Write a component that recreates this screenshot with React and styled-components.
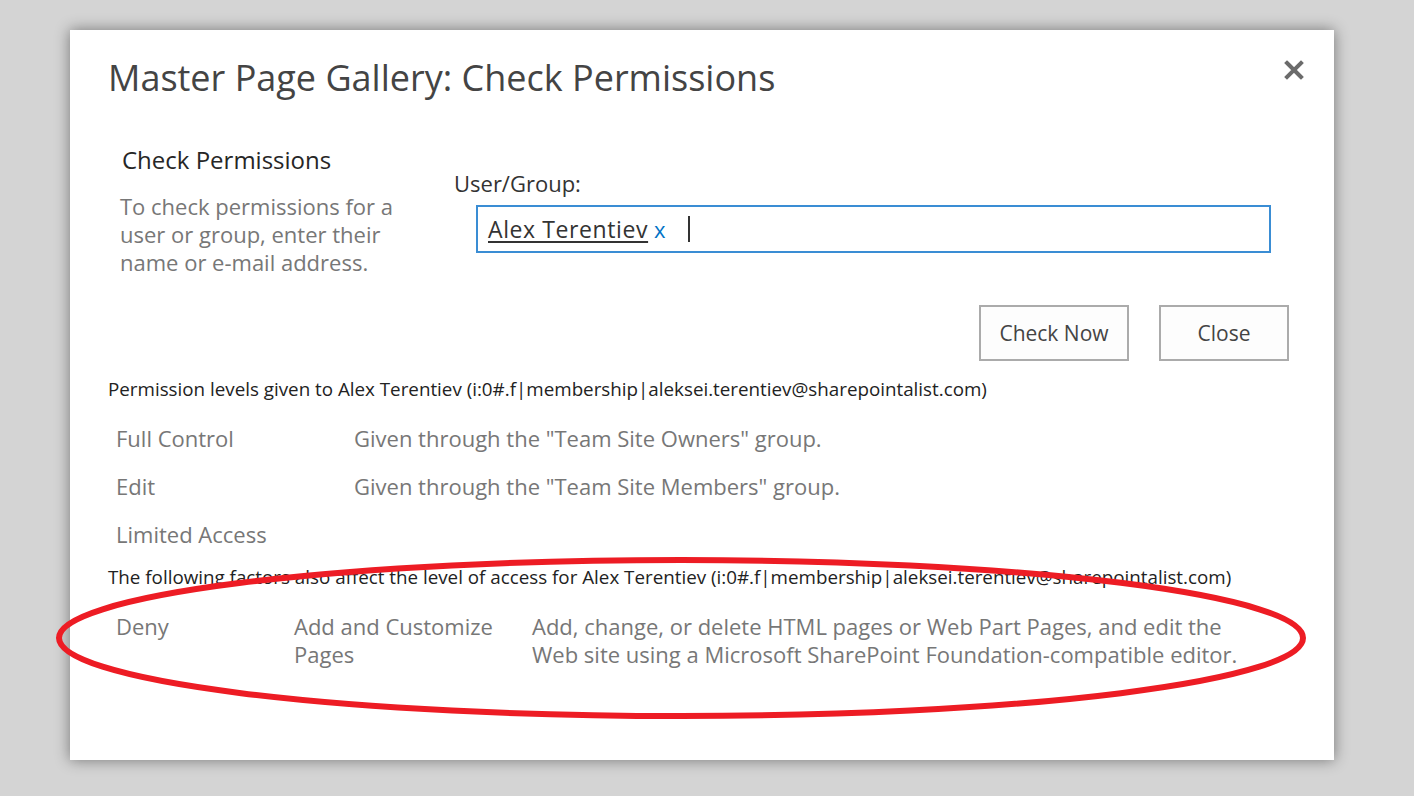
import React from 'react';
import styled, { createGlobalStyle } from 'styled-components';

const GlobalStyle = createGlobalStyle`
  html, body {
    margin: 0;
    padding: 0;
    background: #d4d4d4;
  }
  body {
    font-family: "Open Sans", "Liberation Sans", sans-serif;
    overflow: hidden;
  }
`;

const permissions = [
  { level: 'Full Control', source: 'Given through the "Team Site Owners" group.' },
  { level: 'Edit', source: 'Given through the "Team Site Members" group.' },
  { level: 'Limited Access', source: '' },
];

const account = 'Alex Terentiev (i:0#.f|membership|aleksei.terentiev@sharepointalist.com)';

const App = () => {
  return (
    <Page>
      <GlobalStyle />
      <Dialog>
        <Header>
          <Title>Master Page Gallery: Check Permissions</Title>
          <CloseIcon aria-label="close">
            <svg width="20" height="20" viewBox="0 0 20 20">
              <path d="M3 3 L17 17 M17 3 L3 17" stroke="#6b6b6b" strokeWidth="4" strokeLinecap="square" />
            </svg>
          </CloseIcon>
        </Header>

        <TopSection>
          <Intro>
            <IntroTitle>Check Permissions</IntroTitle>
            <IntroText>
              To check permissions for a user or group, enter their name or e-mail address.
            </IntroText>
          </Intro>
          <Field>
            <FieldLabel>User/Group:</FieldLabel>
            <PeoplePicker>
              <Person>Alex Terentiev</Person>
              <RemoveLink>x</RemoveLink>
              <Caret />
            </PeoplePicker>
          </Field>
        </TopSection>

        <Buttons>
          <Button $width={150}>Check Now</Button>
          <Button $width={130}>Close</Button>
        </Buttons>

        <SectionLabel $gap={16}>Permission levels given to {account}</SectionLabel>
        <LevelTable>
          {permissions.map(p => (
            <LevelRow key={p.level}>
              <LevelCell>{p.level}</LevelCell>
              <LevelCell>{p.source}</LevelCell>
            </LevelRow>
          ))}
        </LevelTable>

        <SectionLabel $gap={7}>The following factors also affect the level of access for {account}</SectionLabel>
        <DenyRow>
          <GrayText>Deny</GrayText>
          <GrayText>Add and Customize Pages</GrayText>
          <GrayText>
            Add, change, or delete HTML pages or Web Part Pages, and edit the Web site using a
            Microsoft SharePoint Foundation-compatible editor.
          </GrayText>
        </DenyRow>

        <Annotation width="1300" height="200" viewBox="0 0 1300 200">
          <ellipse cx="626" cy="100" rx="622" ry="78" fill="none" stroke="#ed1c24" strokeWidth="6" />
        </Annotation>
      </Dialog>
    </Page>
  );
};

const Page = styled.div`
  width: 1414px;
  height: 796px;
  padding: 30px 0 0 70px;
  box-sizing: border-box;
`;

const Dialog = styled.div`
  position: relative;
  width: 1264px;
  height: 730px;
  box-sizing: border-box;
  background: #fff;
  padding: 26px 45px 0 38px;
  box-shadow: 0 0 14px rgba(0, 0, 0, 0.45);
  display: flex;
  flex-direction: column;
`;

const Header = styled.div`
  display: flex;
  justify-content: space-between;
  align-items: flex-start;
`;

const Title = styled.h1`
  margin: 0;
  font-size: 36px;
  line-height: 44px;
  font-weight: 400;
  color: #444;
`;

const CloseIcon = styled.div`
  margin: 4px -15px 0 0;
  width: 20px;
  height: 20px;
`;

const TopSection = styled.div`
  display: flex;
  margin-top: 44px;
`;

const Intro = styled.div`
  width: 290px;
  padding-left: 12px;
  margin-right: 44px;
`;

const IntroTitle = styled.div`
  padding-left: 2px;
  font-size: 24px;
  line-height: 32px;
  color: #262626;
`;

const IntroText = styled.div`
  margin-top: 16px;
  font-size: 22px;
  line-height: 28px;
  color: #777;
`;

const Field = styled.div`
  flex: 1;
  padding-top: 25px;
`;

const FieldLabel = styled.div`
  font-size: 22px;
  line-height: 28px;
  color: #333;
`;

const PeoplePicker = styled.div`
  margin: 8px 18px 0 22px;
  height: 48px;
  box-sizing: border-box;
  border: 2px solid #3a8dd4;
  display: flex;
  align-items: center;
  padding-left: 10px;
  font-size: 22px;
`;

const Person = styled.span`
  color: #333;
  font-size: 23px;
  letter-spacing: 0.6px;
  text-decoration: underline;
  text-underline-offset: 3px;
`;

const RemoveLink = styled.span`
  color: #0072c6;
  margin-left: 6px;
`;

const Caret = styled.span`
  width: 2px;
  height: 26px;
  background: #333;
  margin-left: 22px;
`;

const Buttons = styled.div`
  display: flex;
  justify-content: flex-end;
  gap: 30px;
  margin-top: 29px;
`;

const Button = styled.button`
  width: ${p => p.$width}px;
  height: 56px;
  border: 2px solid #ababab;
  background: #fdfdfd;
  font-family: inherit;
  font-size: 21px;
  color: #444;
  padding: 0;
`;

const SectionLabel = styled.div`
  margin-top: ${p => p.$gap}px;
  font-size: 18.8px;
  line-height: 24px;
  color: #222;
  white-space: nowrap;
`;

const LevelTable = styled.div`
  margin-top: 13px;
  padding-left: 8px;
`;

const LevelRow = styled.div`
  display: grid;
  grid-template-columns: 238px 1fr;
  height: 48px;
  align-items: center;
`;

const LevelCell = styled.div`
  font-size: 22px;
  line-height: 28px;
  color: #777;
`;

const DenyRow = styled.div`
  margin-top: 23px;
  padding-left: 8px;
  display: grid;
  grid-template-columns: 178px 238px 740px;
`;

const GrayText = styled.div`
  font-size: 22px;
  line-height: 28px;
  color: #777;
  padding-right: 20px;
`;

const Annotation = styled.svg`
  position: absolute;
  left: -15px;
  top: 508px;
  pointer-events: none;
  overflow: visible;
`;

export default App;
